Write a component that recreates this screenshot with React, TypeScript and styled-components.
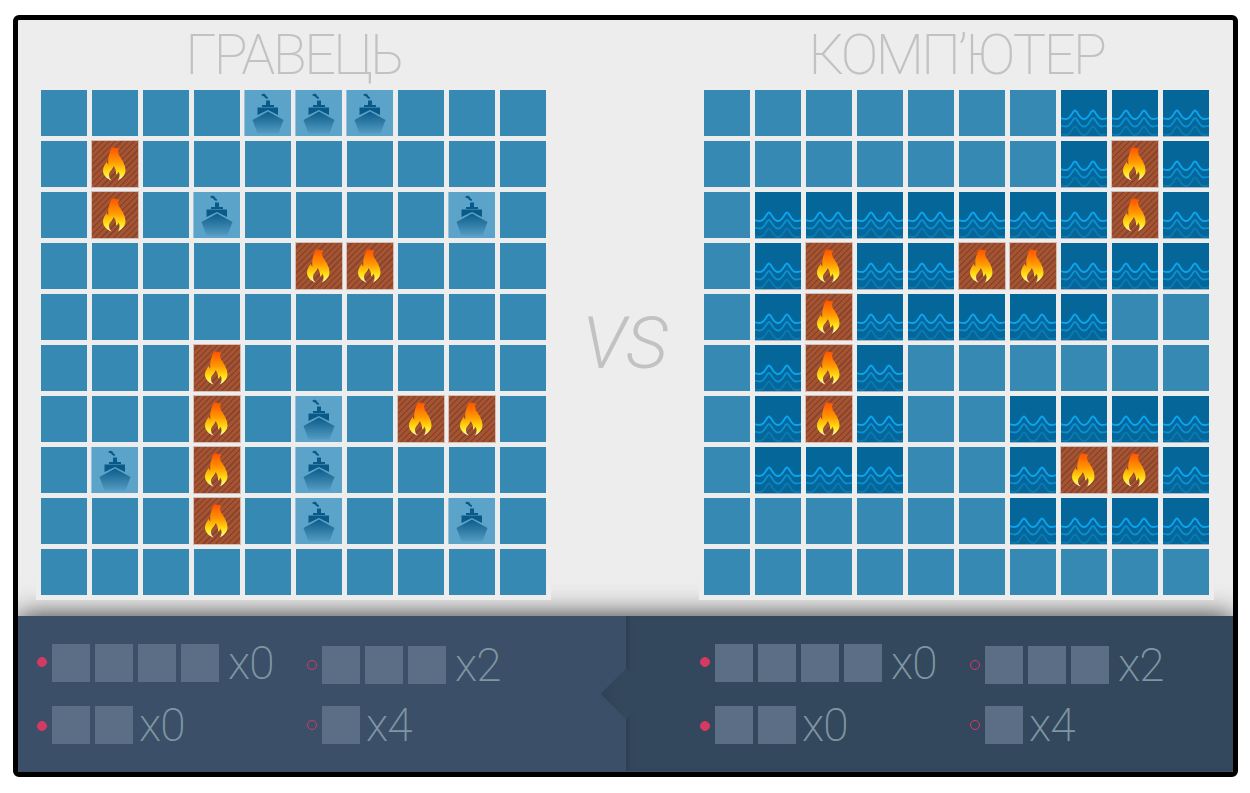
import React from "react";
import styled, { createGlobalStyle } from "styled-components";

type CellKind = "water" | "ship" | "fire" | "miss";

interface FleetRow {
  squares: number;
  left: number;
  sunk: boolean;
  dotShift: number;
  drop: number;
}

const KINDS: Record<string, CellKind> = {
  ".": "water",
  s: "ship",
  f: "fire",
  m: "miss",
};

const PLAYER_BOARD = [
  "....sss...",
  ".f........",
  ".f.s....s.",
  ".....ff...",
  "..........",
  "...f......",
  "...f.s.ff.",
  ".s.f.s....",
  "...f.s..s.",
  "..........",
];

const COMPUTER_BOARD = [
  ".......mmm",
  ".......mfm",
  ".mmmmmmmfm",
  ".mfmmffmmm",
  ".mfmmmmm..",
  ".mfm......",
  ".mfm..mmmm",
  ".mmm..mffm",
  "......mmmm",
  "..........",
];

const FLEET: FleetRow[] = [
  { squares: 4, left: 0, sunk: true, dotShift: -1, drop: 0 },
  { squares: 3, left: 2, sunk: false, dotShift: 0, drop: 2 },
  { squares: 2, left: 0, sunk: true, dotShift: 1, drop: 0 },
  { squares: 1, left: 4, sunk: false, dotShift: 0, drop: 0 },
];

const GlobalStyle = createGlobalStyle`
  html, body {
    margin: 0;
    padding: 0;
    background: #ffffff;
  }
`;

const Frame = styled.div`
  box-sizing: border-box;
  display: flex;
  flex-direction: column;
  width: 1225px;
  height: 762px;
  margin: 15px 0 0 13px;
  border: 5px solid #000000;
  border-radius: 6px;
  background: #ededed;
  overflow: hidden;
  font-family: "Roboto", "Liberation Sans", sans-serif;
`;

const Arena = styled.div`
  display: flex;
  justify-content: space-between;
  height: 596px;
  padding: 0 19px 0 18px;
  box-sizing: border-box;
`;

const Side = styled.section`
  display: flex;
  flex-direction: column;
  width: 515px;
`;

const Title = styled.h1`
  height: 65px;
  margin: 0;
  font-size: 56px;
  font-weight: 200;
  line-height: 71px;
  letter-spacing: -2.6px;
  text-align: center;
  white-space: nowrap;
  color: #c2c2c2;
`;

const Board = styled.div`
  position: relative;
  z-index: 2;
  display: grid;
  grid-template-columns: repeat(10, 46px);
  grid-auto-rows: 46px;
  gap: 5px;
  padding: 5px;
  background: #ededed;
`;

const Cell = styled.div<{ $kind: CellKind }>`
  background: #3589b2;
  ${({ $kind }) =>
    $kind === "ship" &&
    `
      background: #5ba3c8;
      box-shadow: -1px 0 0 rgba(91, 163, 200, 0.6);
    `}
  ${({ $kind }) =>
    $kind === "fire" &&
    `
      background: repeating-linear-gradient(
        135deg,
        #a8532f 0,
        #a8532f 2.8px,
        #87462f 2.8px,
        #87462f 4.4px
      );
      box-shadow: 0 0 0 1px rgba(176, 120, 98, 0.4);
    `}
  ${({ $kind }) =>
    $kind === "miss" &&
    `
      background: #056699;
      box-shadow: 0 1px 0 #a9b9c3;
    `}
  & > svg {
    display: block;
    width: 46px;
    height: 46px;
  }
`;

const Versus = styled.div`
  align-self: flex-start;
  margin-top: 274px;
  width: 148px;
  font-size: 73px;
  font-weight: 350;
  font-style: italic;
  line-height: 98px;
  text-align: center;
  color: #c2c2c2;
`;

const Footer = styled.footer`
  position: relative;
  z-index: 1;
  display: grid;
  grid-template-columns: 608px 607px;
  height: 156px;
  background: #3b5068;
  box-shadow: 0 0 26px rgba(0, 0, 0, 0.8);
`;

const FleetPanel = styled.div<{ $side: "player" | "computer" }>`
  position: relative;
  box-sizing: border-box;
  display: grid;
  grid-template-columns: 270px auto;
  align-content: start;
  row-gap: 22px;
  padding: 28px 0 0 ${({ $side }) => ($side === "player" ? "19px" : "74px")};
  ${({ $side }) =>
    $side === "computer" &&
    `
      height: 155px;
      background: #34485d;
      box-shadow: inset 5px 0 5px -3px rgba(25, 38, 52, 0.35);
      &::before {
        content: "";
        position: absolute;
        top: 50%;
        left: 0;
        width: 36px;
        height: 36px;
        background: linear-gradient(45deg, #2f4256, #34485d 45%);
        transform: translate(-50%, -50%) rotate(45deg);
      }
    `}
`;

const FleetEntry = styled.div<{ $drop: number }>`
  position: relative;
  display: flex;
  align-items: center;
  height: 38px;
  margin-top: ${({ $drop }) => $drop}px;
`;

const Marker = styled.span<{ $sunk: boolean; $shift: number }>`
  box-sizing: border-box;
  flex: none;
  width: 10px;
  height: 10px;
  margin-right: 5px;
  border-radius: 50%;
  border: 1px solid #d63a62;
  background: ${({ $sunk }) => ($sunk ? "#d63a62" : "transparent")};
  transform: translateY(${({ $shift }) => $shift}px);
`;

const Squares = styled.div`
  display: flex;
  gap: 5px;
`;

const Square = styled.span`
  width: 38px;
  height: 38px;
  background: #5c6e85;
`;

const Count = styled.span<{ $wide: boolean }>`
  margin-left: ${({ $wide }) => ($wide ? "9px" : "6px")};
  font-size: 46px;
  font-weight: 200;
  line-height: 38px;
  letter-spacing: -1px;
  color: #7f96a3;
`;

const HiddenDefs = styled.svg`
  position: absolute;
  width: 0;
  height: 0;
`;

const SharedGradients = () => (
  <HiddenDefs aria-hidden="true">
    <defs>
      <linearGradient id="hullFade" x1="0" y1="21" x2="0" y2="46" gradientUnits="userSpaceOnUse">
        <stop offset="0" stopColor="#0a5a89" />
        <stop offset="1" stopColor="#5ba3c8" />
      </linearGradient>
      <linearGradient id="flameFade" x1="0" y1="6" x2="0" y2="40" gradientUnits="userSpaceOnUse">
        <stop offset="0" stopColor="#ff4f00" />
        <stop offset="0.45" stopColor="#ff9a00" />
        <stop offset="0.78" stopColor="#ffe81a" />
        <stop offset="1" stopColor="#fffbe0" />
      </linearGradient>
    </defs>
  </HiddenDefs>
);

const ShipIcon = () => (
  <svg viewBox="0 0 46 46">
    <path
      d="M16.5 4.500c1.500-1.200 3.600-.8 4.400.8.6 1 1 1.600 2.200 2l-.4 1.600c-2-.3-3-1.200-3.700-2.400-.5-.6-1.400-.6-2.200-.6z"
      fill="#0a5a89"
    />
    <rect x="21" y="10.500" width="4" height="5" fill="#0a5a89" />
    <rect x="17" y="15" width="12" height="2" fill="#0a5a89" />
    <path d="M12.500 17.500h20.500v7.500L23 20l-10.500 5z" fill="#0a5a89" />
    <path d="M23 21.500 38.500 30 33.500 43.500H12.500L7.500 30z" fill="url(#hullFade)" />
  </svg>
);

const FlameIcon = () => (
  <svg viewBox="0 0 46 46">
    <path
      d="M20 6.500C24 6 26 7.500 28 8C25.500 9.500 25.500 12 27.500 15C30 19 33.500 24 33.500 29C33.500 33.500 30.500 37 26 39.500C28 36.500 28 33 26.500 30.500C26 32 25 33 24 33.500C24.500 30 23 26.500 21.500 25C21 29 16.500 30.500 17 34.500C17.200 36.500 18 38 19.500 39.500C14.500 37.500 11 34 11 29.500C11 25.500 13.500 22.500 15 20.500C15 22 15.500 23 16.500 23.500C15.500 17 17.500 11 20 6.500Z"
      fill="url(#flameFade)"
    />
  </svg>
);

const WAVE_PATH =
  "M-4-.5C-1 1 2 2 5 2C10 2 11.500-6.500 14-6.500C16.500-6.500 18 2 23 2C28 2 29.500-6.500 32-6.500C34.500-6.500 36 2 41 2C44 2 47 1 50-.5";

const WavesIcon = () => (
  <svg viewBox="0 0 46 46">
    <path d={WAVE_PATH} transform="translate(0 27)" fill="none" stroke="#0ba4ee" strokeWidth="1.9" />
    <path d={WAVE_PATH} transform="translate(0 34.500)" fill="none" stroke="#0b90d4" strokeWidth="1.8" />
    <path d={WAVE_PATH} transform="translate(0 43)" fill="none" stroke="#0a7ab2" strokeWidth="1.8" />
  </svg>
);

const GameBoard: React.FC<{ rows: string[] }> = ({ rows }) => (
  <Board>
    {rows.map((row, rowIndex) =>
      row.split("").map((mark, colIndex) => {
        const kind = KINDS[mark];
        return (
          <Cell $kind={kind} key={`${rowIndex}-${colIndex}`}>
            {kind === "ship" && <ShipIcon />}
            {kind === "fire" && <FlameIcon />}
            {kind === "miss" && <WavesIcon />}
          </Cell>
        );
      })
    )}
  </Board>
);

const Fleet: React.FC<{ side: "player" | "computer" }> = ({ side }) => (
  <FleetPanel $side={side}>
    {FLEET.map((entry) => (
      <FleetEntry $drop={entry.drop} key={entry.squares}>
        <Marker $sunk={entry.sunk} $shift={entry.dotShift} />
        <Squares>
          {Array.from({ length: entry.squares }, (_, index) => (
            <Square key={index} />
          ))}
        </Squares>
        <Count $wide={entry.squares > 2}>x{entry.left}</Count>
      </FleetEntry>
    ))}
  </FleetPanel>
);

const App: React.FC = () => (
  <>
    <GlobalStyle />
    <SharedGradients />
    <Frame>
      <Arena>
        <Side>
          <Title>ГРАВЕЦЬ</Title>
          <GameBoard rows={PLAYER_BOARD} />
        </Side>
        <Versus>VS</Versus>
        <Side>
          <Title>КОМП’ЮТЕР</Title>
          <GameBoard rows={COMPUTER_BOARD} />
        </Side>
      </Arena>
      <Footer>
        <Fleet side="player" />
        <Fleet side="computer" />
      </Footer>
    </Frame>
  </>
);

export default App;
